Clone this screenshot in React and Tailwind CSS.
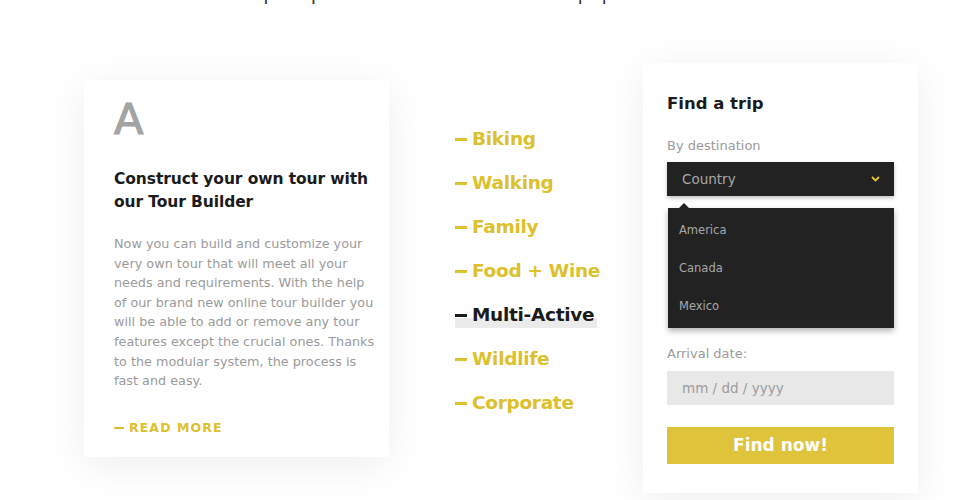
import React from "react";

const font = { fontFamily: '"DejaVu Sans", "Noto Sans", sans-serif' };

const items = ["Biking", "Walking", "Family", "Food + Wine", "Multi-Active", "Wildlife", "Corporate"];

export default function App() {
  return (
    <div className="w-[965px] h-[500px] overflow-hidden bg-white flex flex-col" style={font}>
      <div className="-mt-[39px] pl-[146px] whitespace-nowrap text-[38px] leading-[46px] font-light text-[#333] [word-spacing:12px]">
        Most popular tours app
      </div>
      <div className="flex items-start pt-[56px]">
        {/* Left card */}
        <div className="ml-[84px] mt-[17px] w-[305px] bg-white pl-[30px] pr-[8px] pt-[16px] pb-[20px] shadow-[0_8px_40px_rgba(0,0,0,0.07)]">
          <div className="text-[43px] leading-[46px] font-normal text-[#a3a3a3] [-webkit-text-stroke:1.2px_#a3a3a3]">A</div>
          <h3 className="mt-[26px] text-[15.5px] leading-[23px] font-bold text-[#1b1b1b] tracking-[-0.1px]">
            Construct your own tour with<br />our Tour Builder
          </h3>
          <p className="mt-[20px] text-[12.8px] leading-[19.6px] text-[#9b9b9b] whitespace-nowrap">
            Now you can build and customize your<br />
            very own tour that will meet all your<br />
            needs and requirements. With the help<br />
            of our brand new online tour builder you<br />
            will be able to add or remove any tour<br />
            features except the crucial ones. Thanks<br />
            to the modular system, the process is<br />
            fast and easy.
          </p>
          <div className="mt-[28px] flex items-center gap-[5px] text-[12.5px] leading-[18px] font-bold tracking-[1.1px] text-[#dcc02c]">
            <span className="inline-block w-[10px] h-[2.5px] bg-[#dcc02c]" />
            <span>READ MORE</span>
          </div>
        </div>

        {/* Middle list */}
        <div className="ml-[66px] mt-[62px] flex flex-col">
          {items.map((it) => {
            const active = it === "Multi-Active";
            return (
              <div key={it} className="h-[44px] flex items-start">
                <span
                  className={
                    "flex items-center gap-[5px] pr-[3px] text-[18.5px] leading-[28px] font-bold tracking-[-0.3px] " +
                    (active
                      ? "text-[#1b1b1b] bg-[linear-gradient(transparent_60%,#ebebeb_60%,#ebebeb_96%,transparent_96%)]"
                      : "text-[#dcc02c]")
                  }
                >
                  <span className={"inline-block w-[12px] h-[3px] mt-[1px] " + (active ? "bg-[#1b1b1b]" : "bg-[#dcc02c]")} />
                  <span>{it}</span>
                </span>
              </div>
            );
          })}
        </div>

        {/* Right card */}
        <div className="ml-auto mr-[47px] w-[275px] bg-white px-[24px] pt-[28px] pb-[29px] shadow-[0_8px_40px_rgba(0,0,0,0.07)]">
          <h3 className="text-[16.5px] leading-[26px] font-bold text-[#1b1b1b]">Find a trip</h3>
          <div className="mt-[20px] text-[13px] leading-[18px] text-[#9b9b9b]">By destination</div>
          <div className="relative mt-[7px]">
            <div className="h-[34px] bg-[#222] flex items-center justify-between pl-[15px] pr-[14px] shadow-[0_2px_4px_rgba(0,0,0,0.25)]">
              <span className="text-[13.5px] text-[#a8a8a8]">Country</span>
              <svg width="9" height="6" viewBox="0 0 9 6">
                <path d="M1 1 L4.5 4.5 L8 1" stroke="#e6c92a" strokeWidth="1.8" fill="none" />
              </svg>
            </div>
            <div className="absolute left-[1px] right-0 top-[46px] z-10 h-[120px] bg-[#222] shadow-[0_3px_6px_rgba(0,0,0,0.3)] pl-[11px] pt-[14px]">
              <div className="absolute left-[10px] top-[-5px] w-0 h-0 border-l-[6px] border-r-[6px] border-b-[6px] border-l-transparent border-r-transparent border-b-[#222]" />
              {["America", "Canada", "Mexico"].map((c) => (
                <div key={c} className="h-[38px] text-[11.5px] leading-[16px] text-[#a8a8a8]">{c}</div>
              ))}
            </div>
          </div>
          <div className="h-[149px]" />
          <div className="text-[13px] leading-[18px] text-[#9b9b9b]">Arrival date:</div>
          <div className="mt-[8px] h-[34px] bg-[#e8e8e8] flex items-center pl-[15px] text-[13.5px] text-[#9b9b9b]">
            mm / dd / yyyy
          </div>
          <button className="mt-[22px] w-full h-[37px] bg-[#dfc43b] text-white text-[17px] font-bold">
            Find now!
          </button>
        </div>
      </div>
    </div>
  );
}
